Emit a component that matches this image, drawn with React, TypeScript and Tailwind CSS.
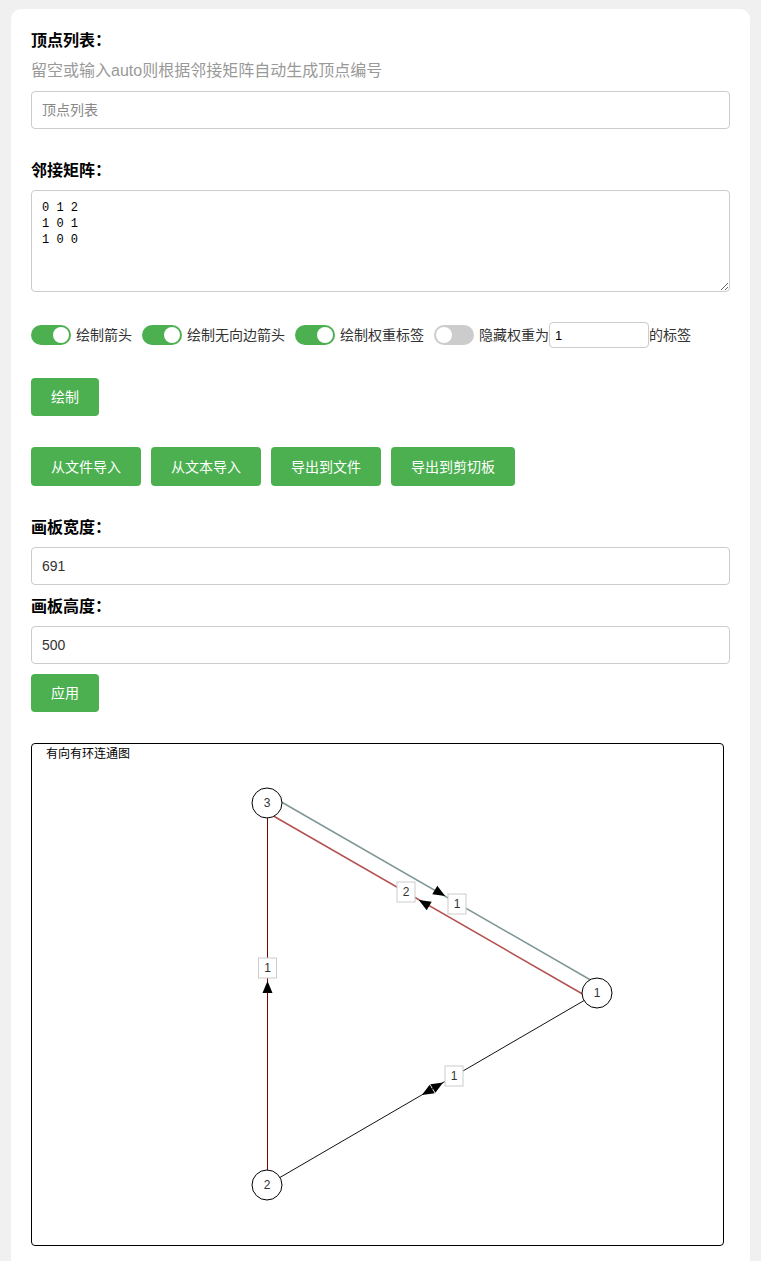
import { useState } from 'react';

const FONT = '"Liberation Sans", "Noto Sans CJK SC", sans-serif';

interface Pt {
  x: number;
  y: number;
}

// arrow triangle centred on c, pointing along (dx, dy)
function Arrow({ c, dx, dy }: { c: Pt; dx: number; dy: number }) {
  const len = Math.hypot(dx, dy);
  const ux = dx / len;
  const uy = dy / len;
  const nx = -uy;
  const ny = ux;
  const tip = `${c.x + ux * 6},${c.y + uy * 6}`;
  const b1 = `${c.x - ux * 6 + nx * 5},${c.y - uy * 6 + ny * 5}`;
  const b2 = `${c.x - ux * 6 - nx * 5},${c.y - uy * 6 - ny * 5}`;
  return <polygon points={`${tip} ${b1} ${b2}`} fill="#000" />;
}

function WeightLabel({ x, y, text }: { x: number; y: number; text: string }) {
  return (
    <g>
      <rect x={x - 9} y={y - 10} width={18} height={20} fill="#fff" stroke="#cccccc" strokeWidth={1} />
      <text x={x} y={y + 4} textAnchor="middle" fontSize={12} fill="#333" style={{ fontFamily: FONT }}>
        {text}
      </text>
    </g>
  );
}

function Node({ x, y, label }: { x: number; y: number; label: string }) {
  return (
    <g>
      <circle cx={x} cy={y} r={15} fill="#fff" stroke="#000" strokeWidth={1} />
      <text x={x} y={y + 4} textAnchor="middle" fontSize={12} fill="#333" style={{ fontFamily: FONT }}>
        {label}
      </text>
    </g>
  );
}

function Toggle({ on, onClick }: { on: boolean; onClick: () => void }) {
  return (
    <button
      type="button"
      onClick={onClick}
      className={`relative w-10 h-5 rounded-full shrink-0 ${on ? 'bg-[#4caf50]' : 'bg-[#cccccc]'}`}
    >
      <span
        className={`absolute top-[2px] w-4 h-4 rounded-full bg-white ${on ? 'left-[22px]' : 'left-[2px]'}`}
      />
    </button>
  );
}

function GraphCanvas() {
  const n1 = { x: 565, y: 249 };
  const n2 = { x: 235, y: 441 };
  const n3 = { x: 235, y: 59 };

  return (
    <div className="w-[693px] h-[503px] border border-black rounded-[4px] bg-white overflow-hidden">
      <svg width={691} height={500} viewBox="0 0 691 500">
        <text x={14} y={14} fontSize={12} fill="#000" style={{ fontFamily: FONT }}>
          有向有环连通图
        </text>

        {/* 2 -> 3 */}
        <line x1={235.5} y1={n2.y} x2={235.5} y2={n3.y} stroke="#800000" strokeWidth={1} />
        {/* 3 -> 1 */}
        <line x1={239} y1={52} x2={569} y2={242} stroke="#7f9696" strokeWidth={1.5} />
        {/* 1 -> 3 */}
        <line x1={231} y1={66} x2={561} y2={256} stroke="#b45050" strokeWidth={1.5} />
        {/* 1 <-> 2 */}
        <line x1={n1.x} y1={n1.y} x2={n2.x} y2={n2.y} stroke="#111" strokeWidth={1} />

        <Arrow c={{ x: 235.5, y: 243 }} dx={0} dy={-1} />
        <Arrow c={{ x: 408, y: 149 }} dx={330} dy={190} />
        <Arrow c={{ x: 392, y: 159 }} dx={-330} dy={-190} />
        <Arrow c={{ x: 395, y: 348 }} dx={-330} dy={192} />
        <Arrow c={{ x: 406, y: 341.5 }} dx={330} dy={-192} />

        <WeightLabel x={235.5} y={224} text="1" />
        <WeightLabel x={374} y={148} text="2" />
        <WeightLabel x={425} y={160} text="1" />
        <WeightLabel x={422} y={332} text="1" />

        <Node x={n3.x} y={n3.y} label="3" />
        <Node x={n1.x} y={n1.y} label="1" />
        <Node x={n2.x} y={n2.y} label="2" />
      </svg>
    </div>
  );
}

export default function App() {
  const [arrows, setArrows] = useState(true);
  const [undirected, setUndirected] = useState(true);
  const [weights, setWeights] = useState(true);
  const [hideWeight, setHideWeight] = useState(false);

  const btn = 'h-[38px] px-5 rounded-[4px] bg-[#4caf50] text-white text-sm';

  return (
    <div className="min-h-screen bg-[#f0f0f0] px-[11px] pt-[9px]" style={{ fontFamily: FONT }}>
      <div className="bg-white rounded-[10px] px-5 pt-5 pb-10">
        <div className="text-base font-bold leading-6 text-black">顶点列表：</div>
        <div className="mt-1.5 text-base leading-6 text-[#999]">留空或输入auto则根据邻接矩阵自动生成顶点编号</div>
        <input
          className="mt-2 block w-full h-[38px] px-[10px] border border-[#ccc] rounded-[4px] text-sm text-[#333] placeholder:text-[#888] outline-none"
          placeholder="顶点列表"
        />

        <div className="mt-[30px] text-base font-bold leading-6 text-black">邻接矩阵：</div>
        <textarea
          className="mt-[7px] block w-full h-[102px] px-[10px] py-[9px] border border-[#ccc] rounded-[4px] text-xs leading-4 text-black outline-none"
          style={{ fontFamily: '"Liberation Mono", monospace' }}
          defaultValue={'0 1 2\n1 0 1\n1 0 0'}
        />

        <div className="mt-[30px] flex items-center h-[26px] text-sm text-[#333]">
          <Toggle on={arrows} onClick={() => setArrows(!arrows)} />
          <span className="ml-[5px]">绘制箭头</span>
          <span className="ml-[10px] flex">
            <Toggle on={undirected} onClick={() => setUndirected(!undirected)} />
          </span>
          <span className="ml-[5px]">绘制无向边箭头</span>
          <span className="ml-[10px] flex">
            <Toggle on={weights} onClick={() => setWeights(!weights)} />
          </span>
          <span className="ml-[5px]">绘制权重标签</span>
          <span className="ml-[10px] flex">
            <Toggle on={hideWeight} onClick={() => setHideWeight(!hideWeight)} />
          </span>
          <span className="ml-[5px]">隐藏权重为</span>
          <input
            className="w-[100px] h-[26px] px-[5px] border border-[#ccc] rounded-[4px] text-[13px] text-black outline-none"
            defaultValue="1"
          />
          <span>的标签</span>
        </div>

        <button type="button" className={`mt-[30px] block ${btn}`}>
          绘制
        </button>

        <div className="mt-[31px] flex gap-[10px]">
          <button type="button" className={`${btn} h-[39px]`}>从文件导入</button>
          <button type="button" className={`${btn} h-[39px]`}>从文本导入</button>
          <button type="button" className={`${btn} h-[39px]`}>导出到文件</button>
          <button type="button" className={`${btn} h-[39px]`}>导出到剪切板</button>
        </div>

        <div className="mt-[30px] text-base font-bold leading-6 text-black">画板宽度：</div>
        <input
          className="mt-[7px] block w-full h-[38px] px-[10px] border border-[#ccc] rounded-[4px] text-sm text-[#333] outline-none"
          defaultValue="691"
        />
        <div className="mt-[10px] text-base font-bold leading-6 text-black">画板高度：</div>
        <input
          className="mt-[7px] block w-full h-[38px] px-[10px] border border-[#ccc] rounded-[4px] text-sm text-[#333] outline-none"
          defaultValue="500"
        />
        <button type="button" className={`mt-[10px] block ${btn}`}>
          应用
        </button>

        <div className="mt-[31px]">
          <GraphCanvas />
        </div>
      </div>
    </div>
  );
}
